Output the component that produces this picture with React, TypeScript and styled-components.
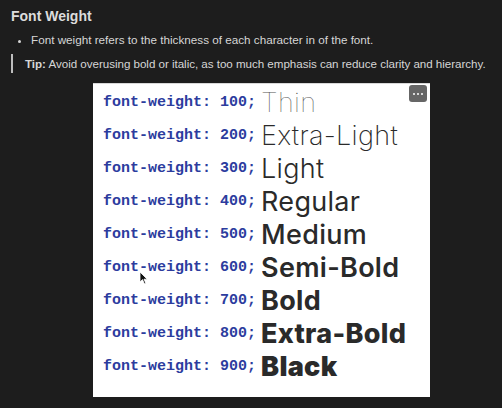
import styled, { createGlobalStyle } from 'styled-components'
import { FC } from 'react'

const weights = [
  { value: 100, label: 'Thin' },
  { value: 200, label: 'Extra-Light' },
  { value: 300, label: 'Light' },
  { value: 400, label: 'Regular' },
  { value: 500, label: 'Medium' },
  { value: 600, label: 'Semi-Bold' },
  { value: 700, label: 'Bold' },
  { value: 800, label: 'Extra-Bold' },
  { value: 900, label: 'Black' },
]

const App: FC = () => {
  return (
    <>
      <GlobalStyle />
      <Page>
        <Heading>Font Weight</Heading>
        <BulletList>
          <li>Font weight refers to the thickness of each character in of the font.</li>
        </BulletList>
        <Callout>
          <strong>Tip:</strong> Avoid overusing bold or italic, as too much emphasis can reduce
          clarity and hierarchy.
        </Callout>
        <Card>
          <MoreButton>
            <Dot />
            <Dot />
            <Dot />
          </MoreButton>
          {weights.map((w) => (
            <WeightRow key={w.value}>
              <Code>font-weight: {w.value};</Code>
              <Sample $weight={w.value}>{w.label}</Sample>
            </WeightRow>
          ))}
          <Cursor width="9" height="14" viewBox="0 0 9 14">
            <path d="M1 1 L1 11 L3.5 8.6 L5.4 12.8 L6.8 12.2 L5 8.2 L8.2 8.2 Z" fill="#111" stroke="#fff" strokeWidth="0.8" />
          </Cursor>
        </Card>
      </Page>
    </>
  )
}

const GlobalStyle = createGlobalStyle`
  html, body {
    margin: 0;
    background: #1d1d1d;
  }
  body {
    font-family: 'Liberation Sans', Arial, sans-serif;
    color: #d6d6d6;
  }
`

const Page = styled.div`
  width: 502px;
  height: 408px;
  padding: 7px 0 0 11px;
  box-sizing: border-box;
  overflow: hidden;
`

const Heading = styled.h1`
  margin: 0;
  font-size: 14px;
  font-weight: 700;
  line-height: 18px;
  color: #dcdcdc;
`

const BulletList = styled.ul`
  margin: 6px 0 0;
  padding: 0 0 0 20px;
  font-size: 11.7px;
  line-height: 18px;
  li::marker {
    font-size: 11px;
  }
`

const Callout = styled.div`
  margin-top: 5px;
  border-left: 2px solid #bdbdbd;
  padding: 1px 0 1px 12px;
  font-size: 11.6px;
  line-height: 17px;
  letter-spacing: -0.03px;
  white-space: nowrap;
  strong {
    font-weight: 700;
  }
`

const Card = styled.div`
  position: relative;
  margin: 10px 0 0 82px;
  width: 337px;
  height: 314px;
  box-sizing: border-box;
  background: #ffffff;
  border-top: 1px solid #d8d8d8;
  padding: 2px 0 0 10px;
`

const MoreButton = styled.div`
  position: absolute;
  top: 1px;
  right: 3px;
  width: 18px;
  height: 17px;
  border-radius: 3px;
  background: #666;
  display: flex;
  align-items: center;
  justify-content: center;
  gap: 2px;
`

const Dot = styled.span`
  width: 2px;
  height: 2px;
  background: #fff;
  border-radius: 1px;
`

const WeightRow = styled.div`
  display: flex;
  align-items: center;
  height: 33px;
  gap: 5px;
`

const Code = styled.span`
  font-family: 'Liberation Mono', 'Courier New', monospace;
  font-weight: 700;
  font-size: 15px;
  color: #2c3c9e;
  white-space: pre;
`

const Sample = styled.span<{ $weight: number }>`
  font-family: Inter, 'Noto Sans', sans-serif;
  font-size: 27px;
  font-weight: ${(p) => p.$weight};
  color: ${(p) => (p.$weight < 200 ? '#555555' : '#2a2a2a')};
  letter-spacing: 0.3px;
`

const Cursor = styled.svg`
  position: absolute;
  left: 46px;
  top: 187px;
`

export default App
